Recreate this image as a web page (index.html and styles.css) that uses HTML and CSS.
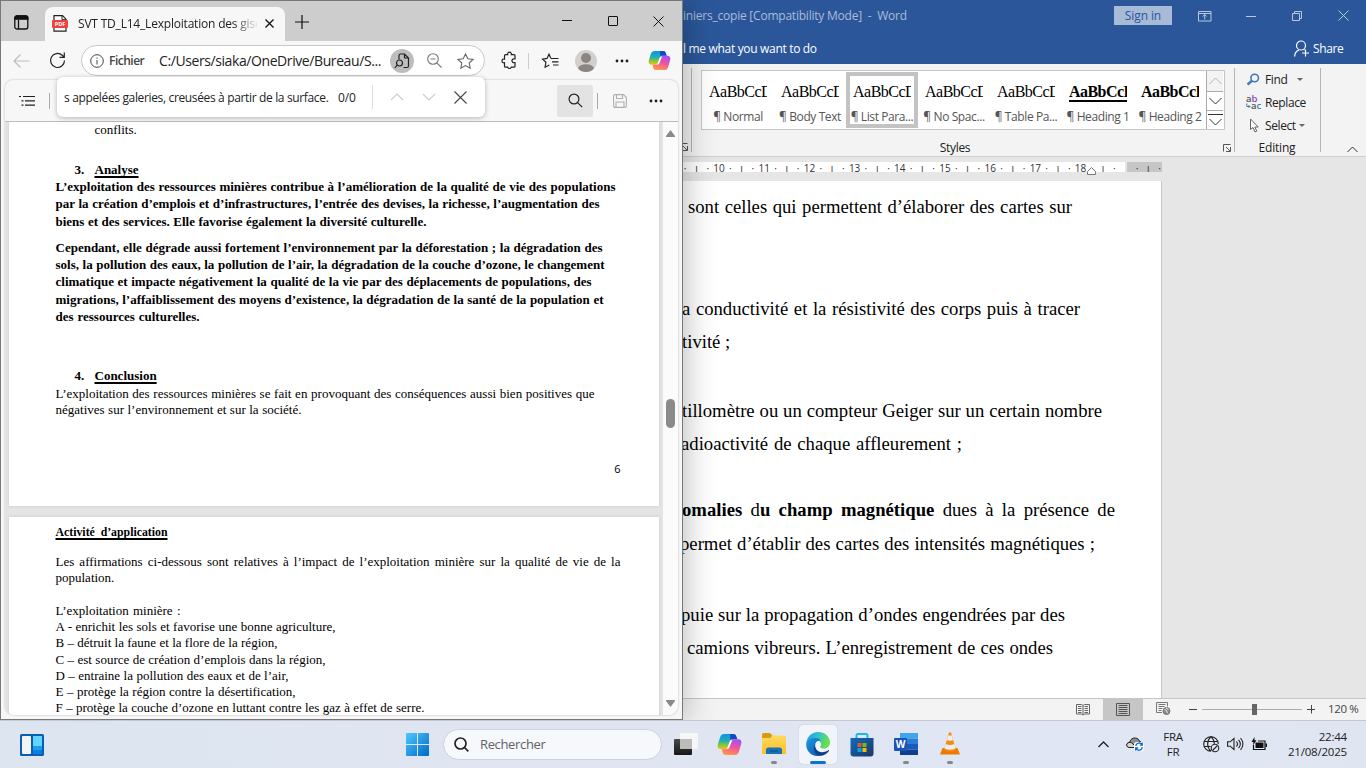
FILE: index.html
```
<!DOCTYPE html>
<html lang="fr">
<head>
<meta charset="utf-8">
<title>Bureau</title>
<link rel="stylesheet" href="styles.css">
</head>
<body>
<svg width="0" height="0" class="defs">
  <defs>
    <linearGradient id="cpA" x1="0" y1="0" x2="0" y2="1"><stop offset="0" stop-color="#0a93ea"/><stop offset=".45" stop-color="#22b0b0"/><stop offset=".75" stop-color="#8fc83a"/><stop offset="1" stop-color="#f5c400"/></linearGradient>
    <linearGradient id="cpB" x1="0.6" y1="0" x2="0.3" y2="1"><stop offset="0" stop-color="#a94ff0"/><stop offset=".5" stop-color="#f0559a"/><stop offset="1" stop-color="#ff9a4a"/></linearGradient>
    <linearGradient id="win" x1="0" y1="0" x2="1" y2="1"><stop offset="0" stop-color="#4cc9ff"/><stop offset="1" stop-color="#0067c8"/></linearGradient>
    <linearGradient id="fold" x1="0" y1="0" x2="0" y2="1"><stop offset="0" stop-color="#ffdb60"/><stop offset="1" stop-color="#fdbd25"/></linearGradient>
    <linearGradient id="edgA" x1="0" y1="0" x2="1" y2="0.3"><stop offset="0" stop-color="#1f9be0"/><stop offset=".5" stop-color="#2fc0d0"/><stop offset="1" stop-color="#6be04c"/></linearGradient>
    <linearGradient id="edgB" x1="0" y1="0" x2="1" y2="1"><stop offset="0" stop-color="#1b9ae4"/><stop offset="1" stop-color="#0c4fa0"/></linearGradient>
    <linearGradient id="store" x1="0" y1="0" x2="1" y2="1"><stop offset="0" stop-color="#0e6fc0"/><stop offset="1" stop-color="#1d3562"/></linearGradient>
    <linearGradient id="tvA" x1="0" y1="0" x2="0" y2="1"><stop offset="0" stop-color="#4a4a4a"/><stop offset="1" stop-color="#161616"/></linearGradient>
    <symbol id="copilot" viewBox="0 0 24 22">
      <path d="M7 1h8.500c2 0 2.600.8 3.100 2.500L19.500 6h-4.200c-1.800 0-2.500.8-3 2.300L10 15.500H4C1.200 15.500 0 13.700.8 11L3 4C3.700 1.900 5 1 7 1z" fill="url(#cpA)"/>
      <path d="M12.500 1h3c2 0 2.600.8 3.100 2.500L19.500 6h-4.200c-1.200 0-1.800.4-2.300 1.100z" fill="#1446c8"/>
      <path d="M17 21H8.500c-2 0-2.600-.8-3.100-2.500L4.700 15.500h4c1.800 0 2.500-.8 3-2.300L14 6h6c2.800 0 4 1.800 3.200 4.500L21 18c-.7 2.100-2 3-4 3z" fill="url(#cpB)"/>
      <path d="M12.600 7.500 14.800 6.500 11.500 14.600 9.300 15.500z" fill="#fff"/>
    </symbol>
    <symbol id="dots" viewBox="0 0 14 4"><g fill="#1f1f1f"><circle cx="2" cy="2" r="1.400"/><circle cx="7" cy="2" r="1.400"/><circle cx="12" cy="2" r="1.400"/></g></symbol>
  </defs>
</svg>

<div class="desktop">

<section class="word">
  <header class="w-title">
    <span class="w-name">iniers_copie [Compatibility Mode]&nbsp; -&nbsp; Word</span>
    <span class="w-sign">Sign in</span>
    <svg class="w-rib" width="14" height="12" viewBox="0 0 14 12" fill="none" stroke="#b9c8df"><path d="M.5 1.500h12.500v9.500H.5zM.5 3.500h12.500M6.700 9.500v-5M4.700 6.500l2-2 2 2"/></svg>
    <svg class="w-min" width="10" height="10" viewBox="0 0 10 10" stroke="#b9c8df"><path d="M0 5.500h10"/></svg>
    <svg class="w-max" width="10" height="10" viewBox="0 0 10 10" fill="none" stroke="#b9c8df"><path d="M.5 2.500h7v7h-7zM2.500 2.500v-2h7v7h-2"/></svg>
    <svg class="w-x" width="11" height="11" viewBox="0 0 11 11" stroke="#b9c8df"><path d="M.5.5l10 10M10.500.5l-10 10"/></svg>
  </header>
  <div class="w-tabs">
    <span class="w-tell">l me what you want to do</span>
    <svg class="w-person" width="15" height="17" viewBox="0 0 15 17" fill="none" stroke="#fff" stroke-width="1.200"><circle cx="7" cy="5.500" r="4.500"/><path d="M.7 16.500c0-3.700 1.800-5.600 4.300-6.500M9.500 9.500l1 .6M8 13h7M11.500 9.500v7"/></svg>
    <span class="w-share">Share</span>
  </div>

  <div class="ribbon">
    <div class="r-left"><svg width="9" height="9" viewBox="0 0 9 9" fill="none" stroke="#555"><path d="M-2 .5h9.500M3 3l4 4M7.500 3v4.500h-4.500"/></svg></div>
    <div class="r-styles">
      <div class="gallery">
        <div class="st"><b class="pv">AaBbCcDd</b><span>¶ Normal</span></div>
        <div class="st"><b class="pv">AaBbCcDd</b><span>¶ Body Text</span></div>
        <div class="st sel"><b class="pv">AaBbCcDd</b><span>¶ List Para...</span></div>
        <div class="st"><b class="pv">AaBbCcDd</b><span>¶ No Spac...</span></div>
        <div class="st"><b class="pv">AaBbCcDd</b><span>¶ Table Pa...</span></div>
        <div class="st"><b class="pv hd un">AaBbCcDd</b><span>¶ Heading 1</span></div>
        <div class="st"><b class="pv hd">AaBbCcDd</b><span>¶ Heading 2</span></div>
        <div class="g-scroll">
          <i class="off"><svg width="13" height="8" viewBox="0 0 13 8" fill="none" stroke="#b5b5b5"><path d="M.5 7l6-6 6 6"/></svg></i>
          <i><svg width="13" height="8" viewBox="0 0 13 8" fill="none" stroke="#333"><path d="M.5 1l6 6 6-6"/></svg></i>
          <i><svg width="15" height="14" viewBox="0 0 15 14" fill="none" stroke="#333"><path d="M0 1.500h15M1.500 6l6 6 6-6"/></svg></i>
        </div>
      </div>
      <div class="r-cap"><span>Styles</span><svg width="8" height="8" viewBox="0 0 8 8" fill="none" stroke="#555"><path d="M.5 7.500v-7h7M3 3l4 4M7.500 3v4.500h-4.500"/></svg></div>
    </div>
    <div class="r-edit">
      <div class="cmd"><svg width="15" height="13" viewBox="0 0 15 13" fill="none" stroke="#3f7ab8"><circle cx="8.700" cy="5" r="3.800" stroke-width="1.600"/><path d="M6 7.800 1.500 11.500" stroke-width="2.400"/></svg><span>Find</span><em class="far"></em></div>
      <div class="cmd rep"><svg width="16" height="16" viewBox="0 0 16 16" class="abac"><text x="0" y="6.500" fill="#555">a<tspan fill="#8a4bb5">b</tspan></text><text x="5" y="14" fill="#555">a<tspan fill="#3f7ab8">c</tspan></text><path d="M.8 8.500v3h3M2.500 10l1.500 1.500L2.500 13" fill="none" stroke="#3f7ab8"/></svg><span>Replace</span></div>
      <div class="cmd"><svg width="15" height="15" viewBox="0 0 15 15" fill="#fff" stroke="#666"><path d="M4.500 1v10.500l2.500-2 2 4.500 1.800-.9-2-4.100h3.400z"/></svg><span>Select</span><em></em></div>
      <div class="e-cap">Editing</div>
    </div>
    <svg class="r-up" width="11" height="7" viewBox="0 0 11 7" fill="none" stroke="#333"><path d="M.5 6l5-5 5 5"/></svg>
  </div>

  <div class="w-body">
    <div class="ruler">
      <i>·</i><i>ı</i><i>·</i><i>10</i><i>·</i><i>ı</i><i>·</i><i>11</i><i>·</i><i>ı</i><i>·</i><i>12</i><i>·</i><i>ı</i><i>·</i><i>13</i><i>·</i><i>ı</i><i>·</i><i>14</i><i>·</i><i>ı</i><i>·</i><i>15</i><i>·</i><i>ı</i><i>·</i><i>16</i><i>·</i><i>ı</i><i>·</i><i>17</i><i>·</i><i>ı</i><i>·</i><i>18</i><i class="mk"><svg width="9" height="8" viewBox="0 0 9 8" fill="#fff" stroke="#777"><path d="M.5 7.500v-3l4-4 4 4v3z"/></svg></i><i>ı</i><i>·</i><i></i><i>·</i><i>ı</i><i>·</i>
    </div>
    <div class="w-page">
      <p class="a1">sont celles qui permettent d’élaborer des cartes sur</p>
      <p class="a2">a conductivité et la résistivité des corps puis à tracer</p>
      <p class="a3">tivité ;</p>
      <p class="a4">tillomètre ou un compteur Geiger sur un certain nombre</p>
      <p class="a5">adioactivité de chaque affleurement ;</p>
      <p class="a6"><b>omalies</b> d<b>u champ magnétique</b> dues à la présence de</p>
      <p class="a7">permet d’établir des cartes des intensités magnétiques ;</p>
      <p class="a8">puie sur la propagation d’ondes engendrées par des</p>
      <p class="a9">camions vibreurs. L’enregistrement de ces ondes</p>
    </div>
  </div>

  <footer class="w-status">
    <svg width="14" height="13" viewBox="0 0 14 13" fill="none" stroke="#666"><path d="M.5 1.500h5l1.500 1 1.500-1h5v9.500h-5l-1.500 1-1.500-1h-5zM7 2.500v9.500M2 3.500h3.500M2 5.500h3.500M2 7.500h3.500M2 9.500h3.500M8.500 3.500h3.500M8.500 5.500h3.500M8.500 7.500h3.500M8.500 9.500h3.500"/></svg>
    <div class="v-on"><svg width="14" height="13" viewBox="0 0 14 13" fill="none" stroke="#555"><path d="M.5.5h13v12H.5zM2.500 2.500h9M2.500 4.500h9M2.500 6.500h9M2.500 8.500h9M2.500 10.500h9"/></svg></div>
    <svg class="v-web" width="15" height="14" viewBox="0 0 15 14" fill="none" stroke="#777"><path d="M6 10.500H.5V.5h11v4M2.500 2.500h7M2.500 4.500h6M2.500 6.500h4M2.500 8.500h3"/><circle cx="10.500" cy="9" r="3.500" fill="#888"/><path d="M8.500 7.500l2 1 1 2.500M10 6l2.500 1.500" stroke="#eee"/></svg>
    <svg class="z-m" width="9" height="9" viewBox="0 0 9 9" stroke="#444"><path d="M0 4.500h8"/></svg>
    <div class="z-track"><div class="z-thumb"></div></div>
    <svg class="z-p" width="9" height="9" viewBox="0 0 9 9" stroke="#444"><path d="M0 4.500h8M4.500 0v8.500"/></svg>
    <span>120 %</span>
  </footer>
</section>

<section class="edge">
  <div class="e-tabs">
    <svg class="t-ws" width="15" height="15" viewBox="0 0 15 15" fill="none" stroke="#111" stroke-width="1.300"><rect x=".8" y="1" width="13" height="13" rx="2"/><path d="M.8 4.200V3a2 2 0 0 1 2-2h9a2 2 0 0 1 2 2v1.200z" fill="#111"/><path d="M4.500 5v9"/></svg>
    <div class="tab">
      <svg width="16" height="17" viewBox="0 0 16 17"><path d="M2 .7h8.500l3.500 3.500v12H2z" fill="#fff" stroke="#222" stroke-width="1.200"/><path d="M10 .7v4h4" fill="none" stroke="#222"/><rect x="0" y="5" width="16" height="8" rx="1" fill="#f04040"/><text x="8" y="11.300" text-anchor="middle" class="pdf">PDF</text></svg>
      <span>SVT TD_L14_Lexploitation des gisements</span>
      <svg class="t-x" width="9" height="9" viewBox="0 0 9 9" stroke="#111" stroke-width="1.300"><path d="M.5.5l8 8M8.500.5l-8 8"/></svg>
    </div>
    <svg class="t-plus" width="14" height="14" viewBox="0 0 14 14" stroke="#111" stroke-width="1.200"><path d="M0 7h14M7 0v14"/></svg>
    <svg class="t-min" width="10" height="10" viewBox="0 0 10 10" stroke="#111"><path d="M0 4.500h10"/></svg>
    <svg class="t-max" width="10" height="10" viewBox="0 0 10 10" fill="none" stroke="#111"><rect x=".5" y=".5" width="9" height="9" rx=".5"/></svg>
    <svg class="t-cls" width="11" height="11" viewBox="0 0 11 11" stroke="#111"><path d="M.5.5l10 10M10.500.5l-10 10"/></svg>
  </div>

  <div class="e-bar">
    <svg class="b-back" width="17" height="14" viewBox="0 0 17 14" fill="none" stroke="#bdbdbd" stroke-width="1.200"><path d="M16.500 7H1M7.500.5 1 7l6.500 6.500"/></svg>
    <svg class="b-ref" width="17" height="17" viewBox="0 0 17 17" fill="none" stroke="#222" stroke-width="1.200"><path d="M15.500 8.500a7 7 0 1 1-2.300-5.200L15 5M15.300.5V5.300h-4.800"/></svg>
    <div class="url">
      <svg width="14" height="14" viewBox="0 0 14 14" fill="none" stroke="#444"><circle cx="7" cy="7" r="6.300"/><path d="M7 6v4.500M7 3.500v1.200"/></svg>
      <span class="u-f">Fichier</span>
      <span class="u-p">C:/Users/siaka/OneDrive/Bureau/S...</span>
      <div class="u-c"><svg width="16" height="18" viewBox="0 0 16 18" fill="none" stroke="#222" stroke-width="1.200"><path d="M5 7.500V3.500c0-1 .5-1.500 1.500-1.500h4l4 4V14c0 1-.5 1.500-1.500 1.500H9.500M10.500 2v4h4"/><circle cx="5.500" cy="11" r="3"/><path d="M3.300 13.200.8 15.800"/></svg></div>
      <svg class="u-z" width="15" height="15" viewBox="0 0 15 15" fill="none" stroke="#777" stroke-width="1.100"><circle cx="6" cy="6" r="5.300"/><path d="M3.500 6h5M9.800 9.800l4.700 4.700"/></svg>
      <svg class="u-s" width="17" height="16" viewBox="0 0 17 16" fill="none" stroke="#666" stroke-width="1.100"><path d="M8.500.9l2.300 4.800 5.300.7-3.900 3.600 1 5.200-4.700-2.600-4.700 2.600 1-5.200L.9 6.400l5.300-.7z"/></svg>
    </div>
    <svg class="b-puz" width="16" height="17" viewBox="0 0 16 17" fill="none" stroke="#222" stroke-width="1.200"><path d="M3.500 3.700c0-.6.400-1 1-1h2.200a1.900 1.900 0 1 1 3.600 0h2.700c.6 0 1 .4 1 1V7h-.8a1.800 1.800 0 1 0 0 3.500h.8v3.700c0 .6-.4 1-1 1h-2.700a1.900 1.900 0 0 1-3.600 0H4.500c-.6 0-1-.4-1-1v-3.500a1.900 1.900 0 1 1 0-3.600z"/></svg>
    <i class="b-sep"></i>
    <svg class="b-fav" width="17" height="16" viewBox="0 0 17 16" fill="none" stroke="#222" stroke-width="1.200"><path d="M8.800 5.200 7 1.200 5 5.400l-4.400.7 3.300 3.200-.8 4.900 4.200-2.200M9 5.500h7.500M10 8.800h6.500M11 12h5.500"/></svg>
    <svg class="b-av" width="22" height="22" viewBox="0 0 22 22"><defs><clipPath id="av"><circle cx="11" cy="11" r="11"/></clipPath></defs><g clip-path="url(#av)"><rect width="22" height="22" fill="#d2cfcc"/><circle cx="11" cy="8" r="5" fill="#8b8681"/><ellipse cx="11" cy="19" rx="8" ry="4.800" fill="#8b8681"/></g></svg>
    <svg class="b-dots" width="14" height="4"><use href="#dots"/></svg>
    <svg class="b-cp" width="23" height="21"><use href="#copilot"/></svg>
  </div>

  <div class="viewer">
    <div class="v-bar">
      <svg class="p-list" width="17" height="12" viewBox="0 0 17 12" stroke="#222" stroke-width="1.200"><path d="M0 1.500h2M4 1.500h12M2.500 5.800h2M6 5.800h10M2.500 10.200h2M6 10.200h10"/></svg>
      <i class="p-sep"></i>
      <div class="p-find"><svg width="15" height="15" viewBox="0 0 15 15" fill="none" stroke="#222" stroke-width="1.200"><circle cx="6" cy="6" r="4.900"/><path d="M9.600 9.600l4.600 4.600"/></svg></div>
      <i class="p-sep2"></i>
      <svg class="p-save" width="14" height="14" viewBox="0 0 14 14" fill="none" stroke="#b0b0b0" stroke-width="1.100"><path d="M.6 2c0-.9.500-1.400 1.400-1.400h8.500l2.900 2.900V12c0 .9-.5 1.400-1.400 1.400H2c-.9 0-1.400-.5-1.400-1.400zM3.500.6v3.900h6V.6M3 13.400V8h8v5.400"/></svg>
      <svg class="p-dots" width="14" height="4"><use href="#dots"/></svg>
    </div>
    <div class="v-body">
      <div class="sheets">
        <article class="sheet s1">
          <p class="cf">conflits.</p>
          <p class="h h1"><b>3.</b><b class="u">Analyse</b></p>
          <p class="b c1">L’exploitation des ressources minières contribue à l’amélioration de la qualité de vie des populations</p>
          <p class="b c2">par la création d’emplois et d’infrastructures, l’entrée des devises, la richesse, l’augmentation des</p>
          <p class="b c3">biens et des services. Elle favorise également la diversité culturelle.</p>
          <p class="b c4">Cependant, elle dégrade aussi fortement l’environnement par la déforestation ; la dégradation des</p>
          <p class="b c5">sols, la pollution des eaux, la pollution de l’air, la dégradation de la couche d’ozone, le changement</p>
          <p class="b c6">climatique et impacte négativement la qualité de la vie par des déplacements de populations, des</p>
          <p class="b c7">migrations, l’affaiblissement des moyens d’existence, la dégradation de la santé de la population et</p>
          <p class="b c8">des ressources culturelles.</p>
          <p class="h h2"><b>4.</b><b class="u">Conclusion</b></p>
          <p class="d1">L’exploitation des ressources minières se fait en provoquant des conséquences aussi bien positives que</p>
          <p class="d2">négatives sur l’environnement et sur la société.</p>
          <p class="num">6</p>
        </article>
        <article class="sheet s2">
          <p class="act"><b class="u">Activité d’application</b></p>
          <p class="f1">Les affirmations ci-dessous sont relatives à l’impact de l’exploitation minière sur la qualité de vie de la</p>
          <p class="f2">population.</p>
          <p class="f3">L’exploitation minière :</p>
          <p class="f4">A - enrichit les sols et favorise une bonne agriculture,</p>
          <p class="f5">B – détruit la faune et la flore de la région,</p>
          <p class="f6">C – est source de création d’emplois dans la région,</p>
          <p class="f7">D – entraine la pollution des eaux et de l’air,</p>
          <p class="f8">E – protège la région contre la désertification,</p>
          <p class="f9">F – protège la couche d’ozone en luttant contre les gaz à effet de serre.</p>
        </article>
      </div>
      <div class="scroll">
        <svg width="9" height="7" viewBox="0 0 9 7"><path d="M4.500 0 9 6v1H0V6z" fill="#8a8a8a"/></svg>
        <div class="thumb"></div>
        <svg width="9" height="7" viewBox="0 0 9 7"><path d="M4.500 7 9 1V0H0v1z" fill="#8a8a8a"/></svg>
      </div>
    </div>
  </div>

  <div class="findbar">
    <span class="q">s appelées galeries, creusées à partir de la surface.</span>
    <span class="n">0/0</span>
    <i></i>
    <svg width="12" height="8" viewBox="0 0 12 8" fill="none" stroke="#ccc" stroke-width="1.100"><path d="M0 7l6-6 6 6"/></svg>
    <svg class="dn" width="12" height="8" viewBox="0 0 12 8" fill="none" stroke="#ccc" stroke-width="1.100"><path d="M0 1l6 6 6-6"/></svg>
    <svg class="cl" width="13" height="13" viewBox="0 0 13 13" stroke="#444" stroke-width="1.100"><path d="M.5.5l12 12M12.500.5l-12 12"/></svg>
  </div>
</section>

<footer class="taskbar">
  <svg class="k-wid" width="24" height="22" viewBox="0 0 24 22"><rect width="24" height="22" rx="1.500" fill="#0a5fb4"/><rect x="2" y="2" width="9" height="18" rx="1" fill="#f4f4f4"/><rect x="13" y="2" width="9" height="10" fill="#62d5ff"/><rect x="13" y="12" width="9" height="4" fill="#1b9df0"/><rect x="13" y="16" width="9" height="4" fill="#0a7fe0"/></svg>
  <svg class="k-win" width="23" height="23" viewBox="0 0 23 23" fill="url(#win)"><path d="M0 1a1 1 0 0 1 1-1h10v11H0zM12 0h10a1 1 0 0 1 1 1v10H12zM0 12h11v11H1a1 1 0 0 1-1-1zM12 12h11v10a1 1 0 0 1-1 1H12z"/></svg>
  <div class="search"><svg width="15" height="15" viewBox="0 0 15 15" fill="none" stroke="#222" stroke-width="1.700"><circle cx="6.500" cy="6.500" r="5.500"/><path d="M10.500 10.500l3.800 3.800"/></svg><span>Rechercher</span></div>
  <svg class="k-tv" width="24" height="23" viewBox="0 0 24 23"><rect x="0" y="6" width="18" height="16" rx="1" fill="url(#tvA)"/><rect x="6" y="0" width="18" height="16" rx="1" fill="#f6f6f6"/><rect x="6" y="6" width="12" height="10" fill="#bcbcbc"/></svg>
  <svg class="k-cp" width="25" height="23"><use href="#copilot"/></svg>
  <div class="app k-fold"><svg width="24" height="22" viewBox="0 0 24 22"><path d="M0 1.500A1.500 1.500 0 0 1 1.500 0H8l2.500 2.500V6H0z" fill="#d99a12"/><path d="M0 5h8l2.500-2.500H24V21H0z" fill="url(#fold)"/><path d="M4 21v-4a2.500 2.500 0 0 1 2.500-2.500h11A2.500 2.500 0 0 1 20 17v4z" fill="#1673b8"/><path d="M8 18h8" stroke="#0c4f88" stroke-width="1.200"/></svg><i></i></div>
  <div class="app on"><svg width="24" height="24" viewBox="0 0 24 24"><path d="M.5 10C1.500 4.300 6.300 0 12 0c7 0 12 5 12 10.500 0 3.500-2.500 6-6 6-2.500 0-3.800-.8-3.800-1.600 0-.6.8-1 .8-2.600 0-2.600-2.500-4.800-5.500-4.800C5.500 7.500 2 8 .5 10z" fill="url(#edgA)"/><path d="M.3 10.500C1.500 7.500 5 5.800 9.500 6c2.500.1 4.500 1.200 5.300 3-2.800-1.200-5.800 1-5.800 4.500 0 5 4.500 9.500 9.500 7.500-2 2-4.200 3-7 3C4.500 24-.8 18 .3 10.500z" fill="url(#edgB)"/><path d="M9.300 12c-1 4.500 2.200 8.200 6.700 8.200 3 0 4.800-1.200 6.300-2 .6-.3 1 .2.600.8C20.700 22.300 17 24 13.500 23.700 8.500 22.500 6.500 16.500 9.300 12z" fill="#103f84"/></svg><i></i></div>
  <svg class="k-store" width="24" height="24" viewBox="0 0 24 24"><path d="M6.500 6V2.500A1.500 1.500 0 0 1 8 1h8a1.500 1.500 0 0 1 1.500 1.500V6" fill="none" stroke="#1fb4ee" stroke-width="2"/><path d="M.5 5h23v15.500a3 3 0 0 1-3 3h-17a3 3 0 0 1-3-3z" fill="url(#store)"/><path d="M7.500 10h4v4h-4z" fill="#f25022"/><path d="M12.500 10h4v4h-4z" fill="#7fba00"/><path d="M7.500 15h4v4h-4z" fill="#00a4ef"/><path d="M12.500 15h4v4h-4z" fill="#ffb900"/></svg>
  <div class="app k-word"><svg width="24" height="22" viewBox="0 0 24 22"><path d="M6 0h18v5.500H6z" fill="#41a5ee"/><path d="M6 5.500h18V11H6z" fill="#2b7cd3"/><path d="M6 11h18v5.500H6z" fill="#185abd"/><path d="M6 16.500h18V22H6z" fill="#103f91"/><rect y="5" width="13" height="13" rx="1" fill="#1a55b5"/><text x="6.500" y="15" text-anchor="middle" class="wl">W</text></svg><i></i></div>
  <div class="app k-vlc"><svg width="20" height="23" viewBox="0 0 20 23"><path d="M2.500 16h15l2.500 6.500H0z" fill="#f07a00"/><path d="M9 .5h2l5 17.500c-3.500 2-8.500 2-12 0z" fill="#f48a10"/><path d="M8.200 3.500h3.600l1.300 4.500c-2 .9-4.200.9-6.200 0zM5.700 12c2.800 1.300 5.800 1.300 8.600 0l1.200 4.500c-3.500 1.700-7.500 1.700-11 0z" fill="#eee"/></svg><i></i></div>
  <div class="tray">
    <svg class="y-ch" width="11" height="7" viewBox="0 0 11 7" fill="none" stroke="#222" stroke-width="1.300"><path d="M.5 6l5-5 5 5"/></svg>
    <svg class="y-cl" width="18" height="14" viewBox="0 0 18 14"><path d="M4 10.500C1 10.500.5 8.500.8 7.500 1.200 6 2.500 5.500 3.500 5.300 4.500 2 7 .8 9.300 1c2.400.2 3.700 1.700 4.200 3.300 1.700.2 2.500 1.500 2.500 2.700v3.500z" fill="#8f8f8f" stroke="#222"/><path d="M4 10.500C1 10.500.5 8.500.8 7.500c.7-2 3-2.500 4.700-1.700L11 10.500z" fill="#d8d8d8" stroke="#222"/><rect x="8" y="5" width="10" height="9" rx="3" fill="#fff"/><path d="M9.800 9A3.300 3.300 0 0 1 16 7.800M16.200 10A3.300 3.300 0 0 1 10 11.500M16.300 5.700v2.500h-2.500M9.700 13.500V11h2.500" fill="none" stroke="#0a6fd0" stroke-width="1.300"/></svg>
    <div class="y-lang">FRA<br>FR</div>
    <svg class="y-gl" width="17" height="17" viewBox="0 0 17 17" fill="none" stroke="#222" stroke-width="1.100"><path d="M8 15.300A7.300 7.300 0 1 1 15.300 8M8 .7C3.500 5 3.500 11 8 15.300M8 .7c2.200 2 3.300 4.500 3.300 7M1.200 5.500h13.500M1.200 10.500h6.500"/><circle cx="12" cy="12" r="3.800"/><path d="M9.500 14.500l5-5"/></svg>
    <svg class="y-vo" width="17" height="14" viewBox="0 0 17 14" fill="none" stroke="#222" stroke-width="1.100"><path d="M.6 4.800h2.600L7 1.500v11L3.200 9.200H.6zM9.500 4.500c1.200 1.500 1.200 3.500 0 5M11.500 2.800c2.200 2.500 2.200 5.900 0 8.400M13.500 1c3.200 3.500 3.200 8.500 0 12"/></svg>
    <svg class="y-ba" width="17" height="14" viewBox="0 0 17 14"><path d="M2.500 8v4.500h11.500V4H7" fill="none" stroke="#111" stroke-width="1.200"/><path d="M4.500 5.500h8v5.500h-8z" fill="#111"/><path d="M15.300 6.500v3.500" stroke="#111" stroke-width="1.400"/><path d="M3.500 0 .5 5h2L2 8.500 5.500 3.300H3.500z" fill="#111"/></svg>
    <div class="y-clk">22:44<br>21/08/2025</div>
  </div>
</footer>
</div>
</body>
</html>
```
FILE: styles.css
```
* { box-sizing: border-box; }
body { margin: 0; font-family: "Open Sans", "Noto Sans", sans-serif; font-size: 12px; color: #222; overflow: hidden; }
p { margin: 0; }
svg { display: block; flex: none; overflow: visible; }
.defs { position: absolute; }
.desktop { position: relative; width: 1366px; height: 768px; overflow: hidden; background: #dfe6f1; }

/* Word window */
.word { position: absolute; left: 683px; top: 0; width: 683px; height: 721px; display: flex; flex-direction: column; overflow: hidden; }
.w-title { height: 31px; background: #2b579a; color: #aabcd8; display: flex; align-items: center; flex: none; }
.w-name { width: 431px; letter-spacing: -.22px; white-space: nowrap; }
.w-sign { width: 58px; height: 19px; line-height: 19px; background: #a7bad7; color: #2b579a; text-align: center; letter-spacing: -.1px; }
.w-rib { margin-left: 26px; }
.w-min { margin-left: 34px; }
.w-max { margin-left: 36px; }
.w-x { margin-left: 36px; }
.w-tabs { height: 33px; background: #2b579a; color: #fff; display: flex; align-items: center; flex: none; }
.w-tell { width: 611px; letter-spacing: -.32px; white-space: nowrap; margin-top: 2px; }
.w-person { margin-top: 1px; }
.w-share { margin: 2px 0 0 4px; letter-spacing: -.4px; }

.ribbon { height: 93px; background: #f3f3f3; border-bottom: 1px solid #cfcfcf; display: flex; flex: none; padding-top: 4px; }
.r-left { width: 9px; height: 84px; border-right: 1px solid #b5b5b5; padding-top: 75px; }
.r-left svg { margin-left: -3px; }
.r-styles { width: 543px; height: 84px; border-right: 1px solid #b5b5b5; padding: 2px 0 0 9px; }
.gallery { width: 524px; height: 60px; border: 1px solid #c6c6c6; background: #fff; display: flex; }
.st { width: 72px; height: 56px; margin-top: 1px; text-align: center; flex: none; padding-top: 9px; }
.st.sel { border: 4px solid #c3c3c3; padding-top: 5px; }
.pv { display: block; width: 58px; height: 23px; margin: 0 auto; overflow: hidden; font: 400 16px/22px "Liberation Serif", serif; color: #000; text-align: left; letter-spacing: -.5px; white-space: nowrap; }
.pv.hd { font-weight: 700; letter-spacing: -.55px; }
.pv.un { text-decoration: underline; text-decoration-thickness: 2px; text-underline-offset: 3px; }
.st span { display: block; font-size: 12px; line-height: 16px; margin: 5px -4px 0; color: #555; letter-spacing: -.4px; white-space: nowrap; }
.g-scroll { width: 17px; display: grid; grid-template-rows: 20px 19px 19px; border-left: 1px solid #ababab; }
.g-scroll i { display: grid; place-items: center; border-top: 1px solid #ababab; background: #fff; }
.g-scroll i.off { background: #f3f3f3; border-top: 0; }
.r-cap { display: flex; margin-top: 10px; height: 16px; align-items: center; }
.r-cap span { width: 508px; text-align: center; line-height: 16px; letter-spacing: -.3px; }
.r-cap svg { margin-left: 14px; }
.r-edit { width: 86px; height: 84px; border-right: 1px solid #b5b5b5; padding: 0 0 0 11px; }
.cmd { display: flex; height: 23px; align-items: center; gap: 4px; letter-spacing: -.4px; white-space: nowrap; }
.cmd span { margin-top: -1px; }
.cmd em { border: 3px solid transparent; border-top-color: #666; border-bottom: 0; margin-left: -1px; }
.cmd em.far { margin-left: 6px; }
.rep { gap: 3px; }
.abac { font: 600 9.500px "Open Sans", sans-serif; letter-spacing: 0; }
.e-cap { line-height: 16px; margin-top: 3px; width: 62px; text-align: center; letter-spacing: -.2px; }
.r-up { margin: 78px 0 0 26px; }

.w-body { height: 541px; background: #e6e6e6; flex: none; padding-top: 5px; overflow: hidden; }
.ruler { display: flex; width: 479px; height: 10px; font-size: 10px; line-height: 12px; color: #333; background: linear-gradient(to right, #fff 442px, #e6e6e6 442px, #e6e6e6 444px, #c6c6c6 444px); }
.ruler i { width: 11.3px; flex: none; font-style: normal; display: flex; justify-content: center; }
.ruler i:first-child { margin-left: -3.500px; }
.ruler .mk svg { margin-top: 5px; }
.w-page { width: 479px; height: 517px; margin-top: 9px; background: #fff; border-right: 1px solid #c6c6c6; font: 18.700px/22px "Liberation Serif", serif; color: #000; padding-top: 15px; overflow: hidden; }
.w-page p { height: 22px; white-space: nowrap; text-align: justify; text-align-last: justify; }
.w-page .a1 { margin-left: 5px; width: 384px; }
.w-page .a2 { margin: 80px 0 0 -1px; width: 398px; }
.w-page .a3 { margin: 11px 0 0 -1px; width: 48px; }
.w-page .a4 { margin: 47px 0 0 -1px; width: 420px; }
.w-page .a5 { margin: 11px 0 0 -2px; width: 281px; }
.w-page .a6 { margin: 44px 0 0 -1px; width: 433px; }
.w-page .a7 { margin: 12px 0 0 -3px; width: 415px; }
.w-page .a8 { margin: 49px 0 0 -2px; width: 384px; }
.w-page .a9 { margin: 11px 0 0 4px; width: 366px; }

.w-status { height: 23px; flex: none; background: #f3f3f3; border-top: 1px solid #c6c6c6; border-bottom: 1px solid #b4b8be; display: flex; align-items: center; padding-left: 393px; color: #444; }
.w-status svg { margin-top: -1px; }
.v-on { margin-left: 13px; width: 40px; height: 21px; background: #c6c6c6; display: grid; place-items: center; }
.v-web { margin-left: 13px; }
.z-m { margin-left: 18px; }
.z-track { margin: -1px 0 0 4px; width: 100px; height: 11px; background: linear-gradient(#ababab, #ababab) 0 5px / 100% 1px no-repeat; }
.z-thumb { width: 5px; height: 11px; margin-left: 50px; background: #666; }
.z-p { margin-left: 5px; }
.w-status span { margin: -2px 0 0 12px; font-size: 11.500px; letter-spacing: -.35px; white-space: nowrap; }

/* Edge window */
.edge { position: absolute; left: 0; top: 0; width: 683px; height: 720px; border: 1px solid #787878; background: #f7f7f7; box-shadow: 0 0 32px rgba(0, 0, 0, .3); display: flex; flex-direction: column; }
.e-tabs { height: 40px; background: #cdcdcd; display: flex; flex: none; align-items: flex-start; }
.t-ws { margin: 14px 0 0 13px; }
.tab { margin: 6px 0 0 16px; width: 240px; height: 34px; background: #f7f7f7; border-radius: 8px 8px 0 0; display: flex; align-items: center; padding-left: 7px; }
.tab span { margin: 0 0 1px 10px; width: 179px; overflow: hidden; white-space: nowrap; letter-spacing: -.2px; -webkit-mask-image: linear-gradient(to right, #000 155px, transparent 181px); }
.tab > svg { margin-top: -1px; }
.pdf { font: 700 5.500px "Open Sans", sans-serif; fill: #fff; }
.t-x { margin-left: 8px; }
.t-plus { margin: 14px 0 0 10px; }
.t-min { margin: 15px 0 0 252px; transform: translateX(1px); }
.t-max { margin: 15px 0 0 37px; }
.t-cls { margin: 15px 0 0 35px; }

.e-bar { height: 39px; display: flex; align-items: center; flex: none; padding-left: 12px; }
.b-ref { margin-left: 19px; }
.url { margin-left: 15px; width: 404px; height: 31px; border: 1px solid #c8c8c8; border-radius: 16px; background: #fff; display: flex; align-items: center; padding-left: 8px; flex: none; }
.u-f { margin-left: 5px; width: 50px; font-size: 12px; font-weight: 600; letter-spacing: -.5px; color: #444; }
.u-p { font-size: 14px; width: 222px; letter-spacing: -.41px; white-space: nowrap; color: #222; }
.u-c { margin-left: 9px; width: 24px; height: 24px; border-radius: 50%; background: #bdbdbd; display: grid; place-items: center; flex: none; }
.u-z { margin-left: 13px; }
.u-s { margin-left: 15px; }
.b-puz { margin-left: 16px; }
.b-sep { margin-left: 11px; width: 1px; height: 16px; background: #ccc; }
.b-fav { margin-left: 13px; }
.b-av { margin-left: 16px; }
.b-dots { margin-left: 18px; }
.b-cp { margin-left: 19px; }

.viewer { width: 673px; height: 635px; margin-left: 4px; border-radius: 8px 8px 9px 9px; overflow: hidden; display: flex; flex-direction: column; flex: none; box-shadow: 0 0 2px rgba(0, 0, 0, .3); background: #f7f7f7; }
.v-bar { height: 42px; border-bottom: 1px solid #bcbcbc; display: flex; align-items: center; flex: none; padding-left: 14px; }
.p-sep { margin-left: 13px; width: 1px; height: 16px; background: #aaa; }
.p-find { margin-left: 507px; width: 36px; height: 32px; background: #e3e3e3; border-radius: 2px; display: grid; place-items: center; flex: none; }
.p-sep2 { margin-left: 4px; width: 1px; height: 16px; background: #aaa; }
.p-save { margin-left: 15px; }
.p-dots { margin-left: 22px; }
.v-body { display: flex; flex: 1; min-height: 0; background: #e4e4e4; }
.sheets { width: 658px; padding-left: 4px; overflow: hidden; }
.sheet { width: 650px; background: #fff; padding-left: 46.500px; font: 13px/16px "Liberation Serif", serif; color: #000; overflow: hidden; box-shadow: 0 0 3px rgba(0, 0, 0, .12); }
.s1 { height: 384px; }
.s2 { height: 204px; margin-top: 11px; }
.sheet p { height: 16px; white-space: nowrap; text-align: justify; text-align-last: justify; }
.sheet p.b { font-weight: 700; }
.sheet p.cf { margin-left: 39px; text-align-last: left; }
.sheet p.h { padding-left: 19px; display: flex; margin-top: 24px; }
.h b:first-child { width: 20px; }
.u { text-decoration: underline; text-decoration-thickness: 2px; text-underline-offset: 2px; text-decoration-skip-ink: none; }
.c1 { margin-top: 1px; width: 560px; }
.c2 { margin-top: 1px; width: 544px; }
.c3 { margin-top: 2px; width: 371px; }
.c4 { margin-top: 10px; width: 547px; }
.c5 { margin-top: 1px; width: 549px; }
.c6 { margin-top: 1px; width: 536px; }
.c7 { margin-top: 2px; width: 548px; }
.c8 { margin-top: 1px; width: 144px; }
.sheet p.h2 { margin-top: 43px; }
.d1 { margin-top: 2px; width: 539px; }
.d2 { width: 246px; }
.sheet p.num { margin-top: 43px; width: 565px; text-align-last: right; font-family: "Open Sans", sans-serif; font-size: 11px; }
.act { margin-top: 7px; width: 112px; font-size: 11.800px; }
.f1 { margin-top: 14px; width: 565px; }
.f2 { width: 59px; }
.f3 { margin-top: 17px; width: 125px; }
.f4 { width: 280px; }
.f5 { width: 222px; }
.f6 { margin-top: 1px; width: 270px; }
.f7 { width: 233px; }
.f8 { width: 240px; }
.f9 { width: 369px; }
.scroll { width: 15px; background: #fbfbfb; display: flex; flex-direction: column; align-items: center; padding: 8px 0; }
.thumb { width: 9px; height: 29px; border-radius: 5px; background: #8a8a8a; margin-top: 262px; margin-bottom: auto; }

.findbar { position: absolute; left: 56px; top: 76px; width: 428px; height: 40px; background: #fff; border-radius: 6px; box-shadow: 0 1px 5px rgba(0, 0, 0, .28); display: flex; align-items: center; padding-left: 7px; }
.q { width: 274px; font-size: 12px; letter-spacing: -.35px; white-space: nowrap; }
.n { width: 34px; letter-spacing: -.1px; }
.findbar i { width: 1px; height: 24px; background: #ddd; margin-right: 18px; }
.dn { margin-left: 20px; }
.cl { margin-left: 19px; }

/* Taskbar */
.taskbar { position: absolute; left: 0; top: 720px; width: 1366px; height: 48px; background: linear-gradient(to right, #dde5f0, #e0e6f3 80%, #dfe6f2); border-top: 1px solid #c3c8d2; display: flex; align-items: center; }
.k-wid { margin-left: 20px; }
.k-win { margin-left: 362px; }
.search { margin: -1px 0 0 14px; width: 219px; height: 31px; border-radius: 16px; background: #f6f8fc; border: 1px solid #cdd2df; display: flex; align-items: center; padding-left: 10px; flex: none; }
.search span { margin: -1px 0 0 11px; font-size: 13px; color: #5f6368; letter-spacing: -.35px; }
.k-tv { margin-left: 12px; }
.k-cp { margin-left: 19px; }
.app { width: 38px; height: 39px; border-radius: 4px; display: flex; flex-direction: column; align-items: center; justify-content: space-between; padding-top: 8px; flex: none; }
.app i { width: 6px; height: 3px; border-radius: 2px; background: #85888e; }
.k-fold { margin-left: 13px; }
.on { margin-left: 6px; background: #f1f4fa; box-shadow: 0 0 1px #9aa; padding-top: 7px; }
.on i { width: 16px; background: #0a74d1; }
.k-store { margin-left: 13px; }
.k-word { margin-left: 13px; }
.k-vlc { margin-left: 6px; padding-top: 7px; }
.wl { font: 700 10px "Open Sans", sans-serif; fill: #fff; }
.tray { display: flex; align-items: center; margin: -1px 0 0 129px; flex: none; line-height: 15.500px; color: #222; font-size: 11.500px; letter-spacing: -.35px; }
.y-cl { margin-left: 17px; }
.y-lang { width: 30px; margin: 0 0 0 14px; text-align: center; }
.y-gl { margin-left: 15px; }
.y-vo { margin-left: 7px; }
.y-ba { margin-left: 7px; }
.y-clk { width: 79px; text-align: right; letter-spacing: -.2px; white-space: nowrap; }
```
